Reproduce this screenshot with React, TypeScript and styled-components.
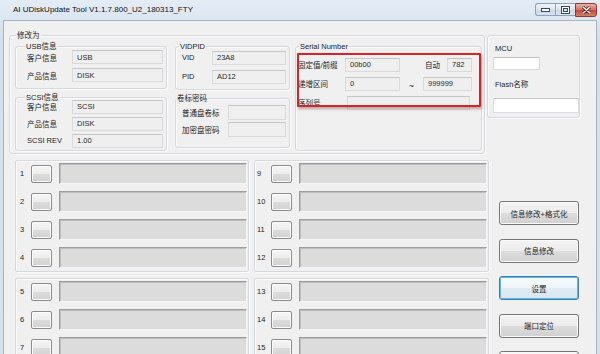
import React from 'react';
import styled, { createGlobalStyle, css } from 'styled-components';

const GlobalStyle = createGlobalStyle`
  * { box-sizing: border-box; }
  html, body {
    margin: 0;
    padding: 0;
    overflow: hidden;
    background: #f0f0f0;
  }
  body {
    font-family: "Liberation Sans", "Noto Sans CJK SC", sans-serif;
    font-size: 7.5px;
    color: #1e1e1e;
  }
`;

// only the ports that fit in the window are listed
const ports = {
  upperLeft: [1, 2, 3, 4],
  upperRight: [9, 10, 11, 12],
  lowerLeft: [5, 6, 7],
  lowerRight: [13, 14, 15],
};

// the last button only shows its top edge in the window
const actions = ['信息修改+格式化', '信息修改', '设置', '端口定位', ''];

const App = () => {
  return (
    <>
      <GlobalStyle />
      <Window>
        <TitleBar>
          <Title>AI UDiskUpdate Tool V1.1.7.800_U2_180313_FTY</Title>
          <Controls>
            <CaptionButton>
              <svg width="9" height="4" viewBox="0 0 9 4">
                <rect x="0.5" y="0.5" width="8" height="3" fill="#fff" stroke="#3b4a5e" />
              </svg>
            </CaptionButton>
            <CaptionButton>
              <svg width="9" height="8" viewBox="0 0 9 8">
                <rect x="0.5" y="0.5" width="8" height="7" fill="#fff" stroke="#3b4a5e" />
                <rect x="2.5" y="2.5" width="4" height="3" fill="#d6e0ec" stroke="#3b4a5e" />
              </svg>
            </CaptionButton>
            <CloseButton>
              <svg width="9" height="8" viewBox="0 0 9 8">
                <path d="M1 1 L8 7 M8 1 L1 7" stroke="#5a1a12" strokeWidth="3" strokeLinecap="round" />
                <path d="M1 1 L8 7 M8 1 L1 7" stroke="#fff" strokeWidth="1.6" strokeLinecap="round" />
              </svg>
            </CloseButton>
          </Controls>
        </TitleBar>

        <Client>
          <TopRow>
            <ModifyGroup>
              <Caption $left={6}>修改为</Caption>
              <InfoColumn>
                <InfoGroup>
                  <Caption $left={9}>USB信息</Caption>
                  <FieldRow $h={18}>
                    <FieldLabel $w={45}>客户信息</FieldLabel>
                    <ValueBox $h={14}>USB</ValueBox>
                  </FieldRow>
                  <FieldRow $h={18}>
                    <FieldLabel $w={45}>产品信息</FieldLabel>
                    <ValueBox $h={14}>DISK</ValueBox>
                  </FieldRow>
                </InfoGroup>
                <ScsiGroup>
                  <Caption $left={9}>SCSI信息</Caption>
                  <FieldRow $h={17}>
                    <FieldLabel $w={45}>客户信息</FieldLabel>
                    <ValueBox $h={14}>SCSI</ValueBox>
                  </FieldRow>
                  <FieldRow $h={17}>
                    <FieldLabel $w={45}>产品信息</FieldLabel>
                    <ValueBox $h={14}>DISK</ValueBox>
                  </FieldRow>
                  <FieldRow $h={17}>
                    <FieldLabel $w={45}>SCSI REV</FieldLabel>
                    <ValueBox $h={14}>1.00</ValueBox>
                  </FieldRow>
                </ScsiGroup>
              </InfoColumn>

              <IdColumn>
                <VidGroup>
                  <Caption $left={3}>VIDPID</Caption>
                  <FieldRow $h={19}>
                    <FieldLabel $w={30}>VID</FieldLabel>
                    <ValueBox $h={14}>23A8</ValueBox>
                  </FieldRow>
                  <FieldRow $h={19}>
                    <FieldLabel $w={30}>PID</FieldLabel>
                    <ValueBox $h={14}>AD12</ValueBox>
                  </FieldRow>
                </VidGroup>
                <LabelGroup>
                  <Caption $left={0}>卷标密码</Caption>
                  <FieldRow $h={17}>
                    <FieldLabel $w={46}>普通盘卷标</FieldLabel>
                    <ValueBox $h={15} />
                  </FieldRow>
                  <FieldRow $h={17}>
                    <FieldLabel $w={46}>加密盘密码</FieldLabel>
                    <ValueBox $h={15} />
                  </FieldRow>
                </LabelGroup>
              </IdColumn>

              <SerialGroup>
                <Caption $left={3}>Serial Number</Caption>
                <FieldRow $h={19}>
                  <FieldLabel $w={47}>固定值/前缀</FieldLabel>
                  <ValueBox $h={14} $w={55}>00b00</ValueBox>
                  <Spacer $w={25} />
                  <FieldLabel $w={22}>自动</FieldLabel>
                  <ValueBox $h={14} $w={25}>782</ValueBox>
                </FieldRow>
                <FieldRow $h={19}>
                  <FieldLabel $w={47}>递增区间</FieldLabel>
                  <ValueBox $h={14} $w={55}>0</ValueBox>
                  <Tilde>~</Tilde>
                  <ValueBox $h={14} $w={49}>999999</ValueBox>
                </FieldRow>
                <FieldRow $h={19}>
                  <FieldLabel $w={49}>序列号</FieldLabel>
                  <ValueBox $h={14} $w={123} />
                </FieldRow>
                <Highlight />
              </SerialGroup>
            </ModifyGroup>

            <McuGroup>
              <McuLabel>MCU</McuLabel>
              <InputBox $w={47} $h={13} />
              <McuLabel $gap={10}>Flash名称</McuLabel>
              <InputBox $w={86} $h={15} $gap={8} />
            </McuGroup>
          </TopRow>

          <BottomRow>
            <PortGrid>
              {[ports.upperLeft, ports.upperRight, ports.lowerLeft, ports.lowerRight].map((list, i) => (
                <Panel key={i} $inset={i % 2 === 0 ? 4 : 2}>
                  {list.map((n) => (
                    <PortRow key={n}>
                      <PortNo $w={i % 2 === 0 ? 11 : 14}>{n}</PortNo>
                      <PortButton />
                      <PortBar />
                    </PortRow>
                  ))}
                </Panel>
              ))}
            </PortGrid>
            <ActionColumn>
              {actions.map((a, i) => (
                <ActionButton key={i} $focused={a === '设置'}>
                  {a}
                </ActionButton>
              ))}
            </ActionColumn>
          </BottomRow>
        </Client>
      </Window>
    </>
  );
};

export default App;

const Window = styled.div`
  width: 600px;
  height: 354px;
  padding: 0 3px;
  display: flex;
  flex-direction: column;
  overflow: hidden;
  background: linear-gradient(#e4ecf6, #d3dfec 40px, #d6e1ee);
`;

const TitleBar = styled.div`
  height: 20px;
  flex: none;
  display: flex;
  justify-content: space-between;
  padding-left: 10px;
`;

const Title = styled.span`
  line-height: 20px;
  font-size: 8px;
  color: #111;
  white-space: nowrap;
`;

const Controls = styled.div`
  display: flex;
  margin-top: 3px;
  height: 14px;
`;

const CaptionButton = styled.div`
  width: 20px;
  height: 13px;
  display: flex;
  align-items: center;
  justify-content: center;
  border: 1px solid #8da2ba;
  border-right: none;
  background: linear-gradient(#f1f5fa, #dbe4ef 50%, #c9d6e6 51%, #d8e3f0);
  &:first-child {
    border-radius: 3px 0 0 3px;
  }
`;

const CloseButton = styled(CaptionButton)`
  width: 22px;
  height: 14px;
  border: 1px solid #8e3c32;
  border-radius: 0 3px 3px 0;
  background: linear-gradient(#eab3a9, #d6705f 50%, #c64a37 51%, #d77c64);
`;

const Client = styled.div`
  flex: 1;
  background: #f0f0f0;
  border: 1px solid #a3b4c7;
  border-bottom: none;
  overflow: hidden;
`;

const TopRow = styled.div`
  display: flex;
  align-items: flex-start;
  margin-top: 14px;
  padding-left: 5px;
`;

const GroupBox = styled.div`
  position: relative;
  border: 1px solid #d5d8dc;
  border-radius: 3px;
  box-shadow: inset 1px 1px 0 #fbfbfb, 1px 1px 0 #fbfbfb;
`;

const Caption = styled.span<{ $left: number }>`
  position: absolute;
  top: -6px;
  left: ${({ $left }) => $left}px;
  padding: 0 1px;
  line-height: 11px;
  background: #f0f0f0;
  white-space: nowrap;
`;

const ModifyGroup = styled(GroupBox)`
  width: 476px;
  display: flex;
  align-items: stretch;
  padding: 10px 2px 2px 5px;
`;

const InfoColumn = styled.div`
  width: 152px;
  display: flex;
  flex-direction: column;
`;

const IdColumn = styled.div`
  width: 115px;
  margin-left: 8px;
  display: flex;
  flex-direction: column;
`;

const InfoGroup = styled(GroupBox)`
  padding: 1px 3px 4px 11px;
`;

const ScsiGroup = styled(InfoGroup)`
  margin-top: 8px;
  padding-top: 0;
  padding-bottom: 1px;
`;

const VidGroup = styled(GroupBox)`
  padding: 1px 3px 3px 6px;
`;

const LabelGroup = styled(VidGroup)`
  margin-top: 8px;
  padding-top: 5px;
  padding-bottom: 9px;
`;

const SerialGroup = styled(GroupBox)`
  width: 187px;
  margin-left: 5px;
  padding: 8px 0 0 2px;
`;

const FieldRow = styled.div<{ $h: number }>`
  display: flex;
  align-items: center;
  height: ${({ $h }) => $h}px;
`;

const FieldLabel = styled.span<{ $w: number }>`
  width: ${({ $w }) => $w}px;
  flex: none;
  white-space: nowrap;
`;

const ValueBox = styled.div<{ $h: number; $w?: number }>`
  height: ${({ $h }) => $h}px;
  ${({ $w }) =>
    $w
      ? css`
          width: ${$w}px;
          flex: none;
        `
      : css`
          flex: 1;
        `}
  display: flex;
  align-items: center;
  padding-left: 4px;
  background: #efefef;
  border: 1px solid #dadada;
  border-top-color: #c6c6c6;
  color: #2a2a2a;
  white-space: nowrap;
`;

const Spacer = styled.span<{ $w: number }>`
  width: ${({ $w }) => $w}px;
  flex: none;
`;

const Tilde = styled.span`
  width: 23px;
  flex: none;
  text-align: center;
  padding-top: 5px;
  font-size: 9px;
`;

const Highlight = styled.div`
  position: absolute;
  left: 1px;
  top: 6px;
  width: 184px;
  height: 54px;
  border: 2px solid #d3262a;
  border-radius: 1px;
  box-shadow: 1px 2px 3px rgba(90, 20, 20, 0.35);
  pointer-events: none;
`;

const McuGroup = styled(GroupBox)`
  width: 93px;
  height: 83px;
  margin-left: 2px;
  display: flex;
  flex-direction: column;
  align-items: flex-start;
  padding: 8px 0 0 5px;
`;

const McuLabel = styled.span<{ $gap?: number }>`
  line-height: 10px;
  margin-left: 2px;
  margin-top: ${({ $gap }) => $gap ?? 0}px;
  margin-bottom: 3px;
  white-space: nowrap;
`;

const InputBox = styled.div<{ $w: number; $h: number; $gap?: number }>`
  width: ${({ $w }) => $w}px;
  height: ${({ $h }) => $h}px;
  margin-top: ${({ $gap }) => ($gap ? $gap - 3 : 0)}px;
  background: #fff;
  border: 1px solid #dcdcdc;
  border-top-color: #c4c4c4;
`;

const BottomRow = styled.div`
  display: flex;
  align-items: flex-start;
  margin-top: 6px;
  padding-left: 11px;
`;

const PortGrid = styled.div`
  display: grid;
  grid-template-columns: 234px 235px;
  column-gap: 5px;
  row-gap: 6px;
`;

const Panel = styled.div<{ $inset: number }>`
  display: flex;
  flex-direction: column;
  gap: 7px;
  padding: 2px 1px 3px ${({ $inset }) => $inset}px;
  border: 1px solid #d5d8dc;
  border-radius: 2px;
  box-shadow: inset 1px 1px 0 #fbfbfb, 1px 1px 0 #fbfbfb;
`;

const PortRow = styled.div`
  display: flex;
  align-items: center;
  height: 21px;
`;

const PortNo = styled.span<{ $w: number }>`
  width: ${({ $w }) => $w}px;
  flex: none;
  line-height: 8px;
`;

const PortButton = styled.div`
  width: 21px;
  height: 18px;
  flex: none;
  margin-right: 7px;
  border: 1px solid #8c8c8c;
  border-radius: 2px;
  background: linear-gradient(#f6f6f6, #ececec 50%, #dcdcdc 51%, #d2d2d2);
  box-shadow: inset 0 0 0 1px #fcfcfc;
`;

const PortBar = styled.div`
  flex: 1;
  height: 21px;
  background: #dcdcdc;
  border: 1px solid;
  border-color: #9c9c9c #f4f4f4 #f4f4f4 #9c9c9c;
  box-shadow: inset 1px 1px 0 #bdbdbd;
`;

const ActionColumn = styled.div`
  width: 80px;
  margin-left: 10px;
  padding-top: 41px;
  display: flex;
  flex-direction: column;
  gap: 13.5px;
`;

const ActionButton = styled.div<{ $focused?: boolean }>`
  height: 24px;
  flex: none;
  display: flex;
  align-items: center;
  justify-content: center;
  border: 1px solid #777;
  border-radius: 3px;
  background: linear-gradient(#f4f4f4, #ebebeb 50%, #dddddd 51%, #d0d0d0);
  box-shadow: inset 0 0 0 1px #fafafa;
  white-space: nowrap;
  ${({ $focused }) =>
    $focused &&
    css`
      border-color: #3c7fb1;
      background: linear-gradient(#f6fbfe, #eef6fb 50%, #dfecf5 51%, #d6e6f1);
      box-shadow: inset 0 0 0 1px #5fb6df;
    `}
`;
